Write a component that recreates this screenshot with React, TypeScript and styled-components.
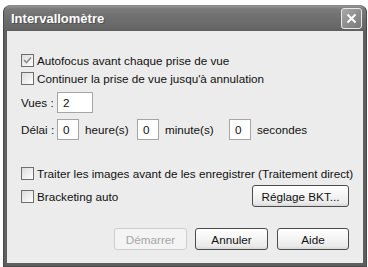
import React from "react";
import styled, { createGlobalStyle } from "styled-components";

const Global = createGlobalStyle`
  html, body { margin: 0; padding: 0; background: #ffffff; }
  body { font-family: "Liberation Sans", Arial, sans-serif; font-size: 11.7px; color: #111; }
`;

const Page = styled.div`
  padding: 5px 0 0 3px;
`;

const Window = styled.div`
  width: 364px;
  height: 262px;
  display: flex;
  flex-direction: column;
  background: #5f5f5f;
  border-radius: 7px 7px 0 0;
  box-sizing: border-box;
  border: 1px solid #4a4a4a;
  border-top-color: #8a8a8a;
`;

const TitleBar = styled.div`
  height: 25px;
  flex: none;
  display: flex;
  align-items: center;
  justify-content: space-between;
  padding: 0 4px 0 7px;
  border-radius: 6px 6px 0 0;
  background: linear-gradient(to bottom, #949494 0%, #7a7a7a 12%, #6e6e6e 50%, #686868 85%, #5e5e5e 100%);
`;

const Title = styled.span`
  font-family: "Liberation Sans", Arial, sans-serif;
  font-weight: bold;
  font-size: 13px;
  color: #ffffff;
  text-shadow: 1px 1px 0 #505050;
`;

const CloseButton = styled.div`
  width: 21px;
  height: 21px;
  box-sizing: border-box;
  border: 1px solid #e8e8e8;
  border-radius: 3px;
  background: linear-gradient(135deg, #a8a8a8 0%, #8a8a8a 60%, #7a7a7a 100%);
  display: flex;
  align-items: center;
  justify-content: center;
`;

const Client = styled.div`
  flex: 1;
  margin: 0 3px 3px 3px;
  background: #ececec;
  padding: 21px 14px 0 14px;
  display: flex;
  flex-direction: column;
`;

const Row = styled.div<{ $mt?: number; $h?: number }>`
  display: flex;
  align-items: center;
  margin-top: ${(p) => p.$mt ?? 0}px;
  height: ${(p) => p.$h ?? 17}px;
`;

const CheckLabel = styled.label`
  display: flex;
  align-items: center;
  gap: 3px;
  white-space: nowrap;
`;

const Box = styled.span`
  width: 13px;
  height: 13px;
  box-sizing: border-box;
  border: 1px solid #6e6e6e;
  background: linear-gradient(135deg, #dcdcdc 0%, #f4f4f4 70%, #ffffff 100%);
  display: inline-flex;
  align-items: center;
  justify-content: center;
`;

const Text = styled.span<{ $ml?: number; $w?: number }>`
  margin-left: ${(p) => p.$ml ?? 0}px;
  ${(p) => (p.$w ? `width: ${p.$w}px; flex: none;` : "")}
  white-space: nowrap;
`;

const Input = styled.div<{ $w: number; $ml?: number }>`
  width: ${(p) => p.$w}px;
  height: 21px;
  flex: none;
  box-sizing: border-box;
  border: 1px solid #a5a5a5;
  background: #ffffff;
  margin-left: ${(p) => p.$ml ?? 0}px;
  padding: 3px 0 0 5px;
`;

const Button = styled.div<{ $w: number; $disabled?: boolean; $ml?: number }>`
  width: ${(p) => p.$w}px;
  height: 22px;
  box-sizing: border-box;
  margin-left: ${(p) => p.$ml ?? 0}px;
  border: 1px solid ${(p) => (p.$disabled ? "#cdcdcd" : "#4c4c4c")};
  border-radius: 3px;
  background: ${(p) =>
    p.$disabled
      ? "#f4f4f4"
      : "linear-gradient(to bottom, #ffffff 0%, #f6f6f6 40%, #eaeaea 85%, #d8d8d8 100%)"};
  color: ${(p) => (p.$disabled ? "#a6a6a6" : "#111")};
  display: flex;
  align-items: center;
  justify-content: center;
  white-space: nowrap;
`;

const Spacer = styled.div`
  flex: 1;
`;

const Check = ({ checked }: { checked?: boolean }) => (
  <Box>
    {checked && (
      <svg width="9" height="9" viewBox="0 0 9 9">
        <path d="M1 4 L3.5 6.5 L8 1.5" stroke="#8c8c8c" strokeWidth="1.6" fill="none" />
      </svg>
    )}
  </Box>
);

export default function App() {
  return (
    <>
      <Global />
      <Page>
        <Window>
          <TitleBar>
            <Title>Intervallomètre</Title>
            <CloseButton>
              <svg width="11" height="11" viewBox="0 0 11 11">
                <path d="M1.5 1.5 L9.5 9.5 M9.5 1.5 L1.5 9.5" stroke="#ffffff" strokeWidth="2" />
              </svg>
            </CloseButton>
          </TitleBar>
          <Client>
            <Row>
              <CheckLabel>
                <Check checked />
                <Text>Autofocus avant chaque prise de vue</Text>
              </CheckLabel>
            </Row>
            <Row $mt={1}>
              <CheckLabel>
                <Check />
                <Text>Continuer la prise de vue jusqu'à annulation</Text>
              </CheckLabel>
            </Row>
            <Row $mt={5} $h={21}>
              <Text $w={36}>Vues :</Text>
              <Input $w={36}>2</Input>
            </Row>
            <Row $mt={6} $h={21}>
              <Text $w={36}>Délai :</Text>
              <Input $w={22}>0</Input>
              <Text $ml={6} $w={44}>heure(s)</Text>
              <Input $w={22} $ml={8}>0</Input>
              <Text $ml={6} $w={57}>minute(s)</Text>
              <Input $w={22} $ml={7}>0</Input>
              <Text $ml={6}>secondes</Text>
            </Row>
            <Row $mt={25}>
              <CheckLabel>
                <Check />
                <Text>Traiter les images avant de les enregistrer (Traitement direct)</Text>
              </CheckLabel>
            </Row>
            <Row $mt={3} $h={22}>
              <CheckLabel>
                <Check />
                <Text>Bracketing auto</Text>
              </CheckLabel>
              <Spacer />
              <Button $w={97}>Réglage BKT...</Button>
            </Row>
            <Row $mt={21} $h={22}>
              <Spacer />
              <Button $w={73} $disabled>Démarrer</Button>
              <Button $w={73} $ml={8}>Annuler</Button>
              <Button $w={72} $ml={9}>Aide</Button>
            </Row>
          </Client>
        </Window>
      </Page>
    </>
  );
}
